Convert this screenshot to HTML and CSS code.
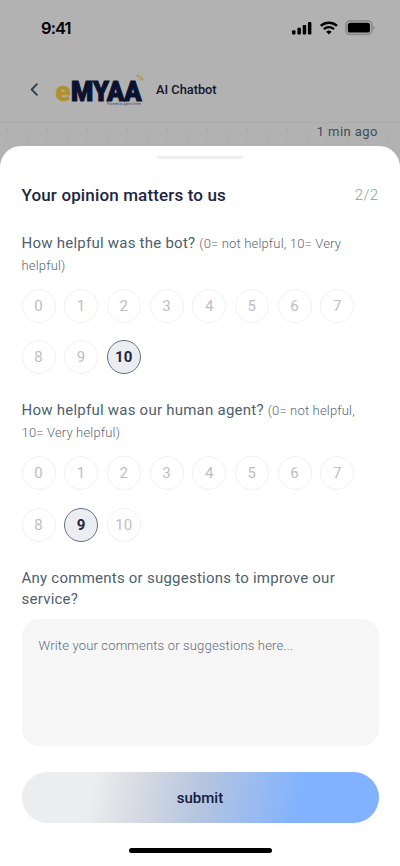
FILE: index.html
```html
<!DOCTYPE html>
<html lang="en">
<head>
<meta charset="utf-8">
<meta name="viewport" content="width=device-width, initial-scale=1">
<title>AI Chatbot</title>
<link rel="stylesheet" href="styles.css">
</head>
<body>
<div class="screen">
  <div class="status">
    <span class="time">9:41</span>
    <svg class="signals" width="84" height="16" viewBox="0 0 84 16">
      <rect x="1" y="10.3" width="3.5" height="4.2" rx="1"/>
      <rect x="6.4" y="7.7" width="3.5" height="6.8" rx="1"/>
      <rect x="11.7" y="4.9" width="3.5" height="9.6" rx="1"/>
      <rect x="16.9" y="2" width="3.5" height="12.5" rx="1"/>
      <path d="M29.8 5.9a12 12 0 0 1 16.2 0" fill="none" stroke="#000" stroke-width="2.6"/>
      <path d="M32.8 9.1a7.7 7.7 0 0 1 10.2 0" fill="none" stroke="#000" stroke-width="2.3"/>
      <path d="M35.2 11.7a4.2 4.2 0 0 1 5.4 0L37.9 14.5Z"/>
      <rect x="54.9" y="0.9" width="26" height="13.4" rx="4.2" fill="none" stroke="#8c8c8c" stroke-width="1.8"/>
      <rect x="56.8" y="2.7" width="22.2" height="9.8" rx="2.6"/>
      <path d="M82.4 5.7q1.2.7 1.2 2.1t-1.2 2.1Z" fill="#858585"/>
    </svg>
  </div>
  <header class="header">
    <svg class="back" width="10" height="14" viewBox="0 0 10 14"><path d="M7.9 2.2 2.7 7.5l5.2 5.3" fill="none" stroke="#2b3e4b" stroke-width="1.8" stroke-linecap="round" stroke-linejoin="round"/></svg>
    <svg class="logo" width="92" height="38" viewBox="0 0 92 38">
      <text class="logo-e" x="0.5" y="30.5" textLength="15" lengthAdjust="spacingAndGlyphs">e</text>
      <text class="logo-main" x="16" y="30.5" textLength="70.5" lengthAdjust="spacingAndGlyphs">MYAA</text>
      <text class="logo-tag" x="52" y="34.5" textLength="34" lengthAdjust="spacingAndGlyphs">Powered by Agent Center</text>
      <g fill="none" stroke="#ad8c29" stroke-width=".9"><circle cx="83" cy="5.7" r="1"/><path d="m83.2 9.6 3.6-4"/><circle cx="87" cy="9" r="1"/></g>
    </svg>
    <span class="title">AI Chatbot</span>
  </header>
  <div class="chat">1 min ago</div>
  <main class="sheet">
    <div class="grabber"></div>
    <div class="heading"><h1>Your opinion matters to us</h1><span>2/2</span></div>
    <section>
      <p class="question">How helpful was the bot? <small>(0= not helpful, 10= Very helpful)</small></p>
      <div class="scale">
        <button>0</button><button>1</button><button>2</button><button>3</button><button>4</button><button>5</button><button>6</button><button>7</button><button>8</button><button>9</button><button class="on">10</button>
      </div>
    </section>
    <section>
      <p class="question">How helpful was our human agent? <small>(0= not helpful, 10= Very helpful)</small></p>
      <div class="scale">
        <button>0</button><button>1</button><button>2</button><button>3</button><button>4</button><button>5</button><button>6</button><button>7</button><button>8</button><button class="on">9</button><button>10</button>
      </div>
    </section>
    <p class="question comments">Any comments or suggestions to improve our service?</p>
    <div class="field">Write your comments or suggestions here...</div>
    <button class="submit">submit</button>
    <div class="home"></div>
  </main>
</div>
</body>
</html>
```
FILE: styles.css
```css
* { box-sizing: border-box; }
body { margin: 0; font-family: Roboto, sans-serif; }
button { font-family: inherit; padding: 0; }
.screen { width: 400px; height: 866px; overflow: hidden; background: #b2b2b2; display: flex; flex-direction: column; }
.status { height: 56px; padding: 0 25px 0 41px; display: flex; justify-content: space-between; align-items: center; }
.time { font: 600 16.5px/20px Inter, sans-serif; letter-spacing: -.9px; color: #000; }
.signals { margin-bottom: 1px; }
.header { height: 67px; padding-left: 29px; display: flex; align-items: center; border-bottom: 1px solid #aaa; }
.logo { margin-left: 16px; overflow: visible; }
.logo-e { font: 900 27px Roboto, sans-serif; fill: #b1902d; stroke: #b1902d; stroke-width: .5px; }
.logo-main { font: 900 28px Roboto, sans-serif; fill: #0b1230; stroke: #0b1230; stroke-width: 1.2px; }
.logo-tag { font: 3px Roboto, sans-serif; fill: #44485a; }
.title { margin-left: 9px; font-size: 12.8px; font-weight: 500; color: #10152f; }
.chat { height: 23px; padding-right: 22px; text-align: right; font-size: 13px; line-height: 17px; letter-spacing: .45px; color: #3e4c59; background: radial-gradient(circle, #acacac 1px, transparent 1.5px) 17px 1px / 20px 11px; flex: none; }
.sheet { flex: 1; background: #fff; border-radius: 21px 21px 0 0; padding: 0 21.5px; }
.grabber { width: 86px; height: 3px; margin: 10px auto 0; border-radius: 2px; background: #eee; }
.heading { display: flex; justify-content: space-between; align-items: center; height: 24px; margin: 24px 0 26px; }
.heading h1 { margin: 0; font-size: 17px; font-weight: 500; letter-spacing: .14px; color: #20263e; }
.heading span { font-size: 15px; font-weight: 300; letter-spacing: .4px; color: #999; }
.question { margin: 0; font-size: 15px; line-height: 21.5px; letter-spacing: .24px; color: #4e606d; }
.question small { font-size: 13px; font-weight: 300; letter-spacing: .17px; color: #566775; }
.scale { display: grid; grid-template-columns: repeat(8, 34px); column-gap: 8.7px; row-gap: 17.3px; margin: 13px 0 26px; }
.scale button { width: 34px; height: 34px; border: 1px solid #f1f1f1; border-radius: 50%; background: #fff; font-size: 15px; letter-spacing: .3px; color: #bebebe; }
.scale .on { border: 1.5px solid #66717d; background: #ecedf1; color: #20263e; font-weight: 700; }
.field { height: 127px; margin-top: 8px; border-radius: 17px; background: #f6f6f6; padding: 18px 17px; font-size: 13px; font-weight: 300; line-height: 18px; letter-spacing: .17px; color: #5d6c7a; }
.submit { display: block; width: 357px; height: 51px; margin-top: 26px; padding-top: 1px; border: 0; border-radius: 26px; font-size: 15px; font-weight: 500; color: #141b40; background: linear-gradient(100deg, #ecedef 20%, #dcdee4 30%, #b5c5df 50%, #80b2ff 78%); }
.home { width: 143px; height: 5px; margin: 25px auto 0; border-radius: 3px; background: #000; }
```
